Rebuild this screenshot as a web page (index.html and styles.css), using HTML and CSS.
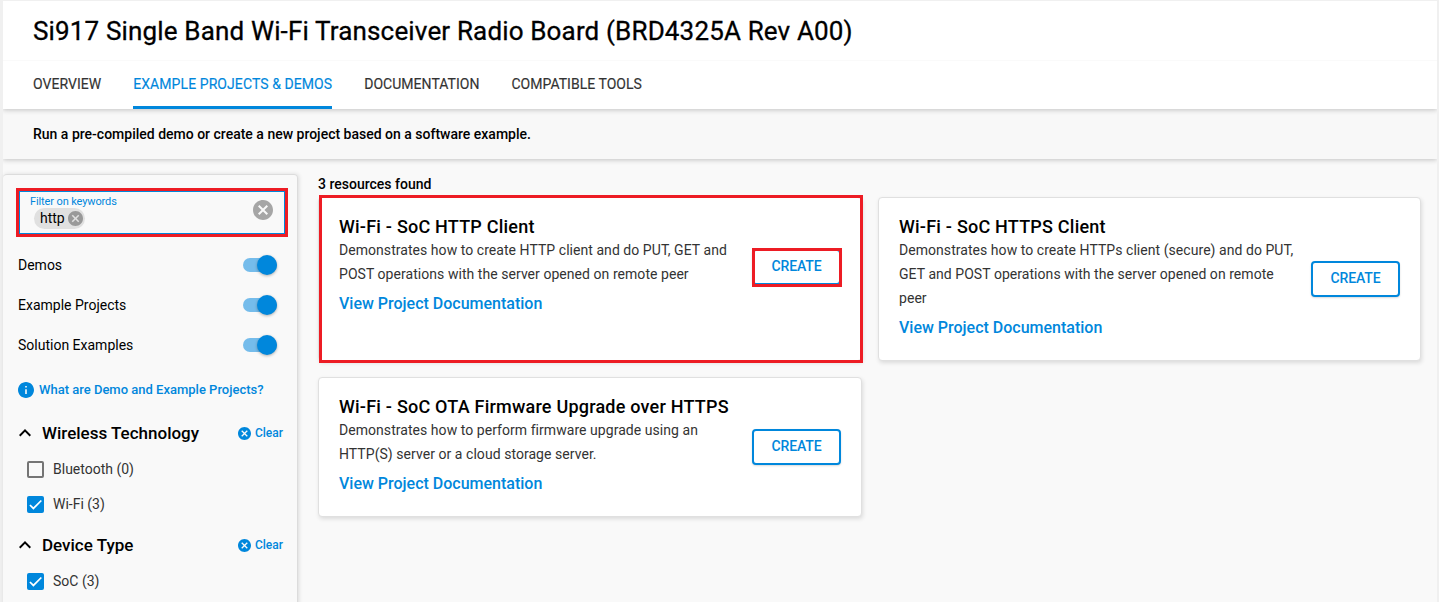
FILE: index.html
```html
<!DOCTYPE html>
<html lang="en">
<head>
<meta charset="utf-8">
<title>Si917 Radio Board</title>
<link rel="stylesheet" href="styles.css">
</head>
<body>
<svg width="0" height="0" class="defs">
  <symbol id="cancel" viewBox="2 2 20 20"><path d="M12 2C6.47 2 2 6.47 2 12s4.47 10 10 10 10-4.47 10-10S17.53 2 12 2zm5 13.59L15.59 17 12 13.41 8.41 17 7 15.59 10.59 12 7 8.41 8.41 7 12 10.59 15.59 7 17 8.41 13.41 12 17 15.59z"/></symbol>
  <symbol id="info" viewBox="2 2 20 20"><path d="M12 2C6.48 2 2 6.48 2 12s4.48 10 10 10 10-4.48 10-10S17.52 2 12 2zm1 15h-2v-6h2v6zm0-8h-2V7h2v2z"/></symbol>
  <symbol id="up" viewBox="6 8 12 8"><path d="M12 8l-6 6 1.41 1.41L12 10.83l4.59 4.58L18 14z"/></symbol>
  <symbol id="check" viewBox="0 0 24 24"><path d="M1.73 12.91L8.1 19.28 22.79 4.59" fill="none" stroke="#fff" stroke-width="3.12"/></symbol>
</svg>
<div class="page">
  <header class="header">
    <h1 class="title">Si917 Single Band Wi-Fi Transceiver Radio Board (BRD4325A Rev A00)</h1>
    <nav class="tabs">
      <a class="tab">OVERVIEW</a>
      <a class="tab active">EXAMPLE PROJECTS &amp; DEMOS</a>
      <a class="tab">DOCUMENTATION</a>
      <a class="tab">COMPATIBLE TOOLS</a>
    </nav>
  </header>
  <div class="intro">Run a pre-compiled demo or create a new project based on a software example.</div>
  <div class="content">
    <aside class="sidebar">
      <div class="filter marked">
        <div>
          <div class="filter-label">Filter on keywords</div>
          <div class="chip">http<svg class="chip-x"><use href="#cancel"/></svg></div>
        </div>
        <svg class="filter-x"><use href="#cancel"/></svg>
      </div>
      <div class="toggle-row">Demos<span class="toggle"><i class="knob"></i></span></div>
      <div class="toggle-row">Example Projects<span class="toggle"><i class="knob"></i></span></div>
      <div class="toggle-row">Solution Examples<span class="toggle"><i class="knob"></i></span></div>
      <a class="help"><svg class="help-icon"><use href="#info"/></svg>What are Demo and Example Projects?</a>
      <section class="group">
        <div class="group-head"><svg class="up"><use href="#up"/></svg><h2 class="group-title">Wireless Technology</h2><a class="clear"><svg class="clear-x"><use href="#cancel"/></svg>Clear</a></div>
        <label class="option"><span class="box"></span>Bluetooth (0)</label>
        <label class="option"><span class="box checked"><svg class="tick"><use href="#check"/></svg></span>Wi-Fi (3)</label>
      </section>
      <section class="group">
        <div class="group-head"><svg class="up"><use href="#up"/></svg><h2 class="group-title">Device Type</h2><a class="clear"><svg class="clear-x"><use href="#cancel"/></svg>Clear</a></div>
        <label class="option"><span class="box checked"><svg class="tick"><use href="#check"/></svg></span>SoC (3)</label>
      </section>
    </aside>
    <main class="main">
      <div class="count">3 resources found</div>
      <div class="cards">
        <article class="card card-marked">
          <div class="text">
            <h3 class="name">Wi-Fi - SoC HTTP Client</h3>
            <p class="desc">Demonstrates how to create HTTP client and do PUT, GET and<br>POST operations with the server opened on remote peer</p>
            <a class="link">View Project Documentation</a>
          </div>
          <button class="create create-marked">CREATE</button>
        </article>
        <article class="card">
          <div class="text">
            <h3 class="name">Wi-Fi - SoC HTTPS Client</h3>
            <p class="desc">Demonstrates how to create HTTPs client (secure) and do PUT,<br>GET and POST operations with the server opened on remote<br>peer</p>
            <a class="link">View Project Documentation</a>
          </div>
          <button class="create">CREATE</button>
        </article>
        <article class="card">
          <div class="text">
            <h3 class="name">Wi-Fi - SoC OTA Firmware Upgrade over HTTPS</h3>
            <p class="desc">Demonstrates how to perform firmware upgrade using an<br>HTTP(S) server or a cloud storage server.</p>
            <a class="link">View Project Documentation</a>
          </div>
          <button class="create">CREATE</button>
        </article>
      </div>
    </main>
  </div>
</div>
</body>
</html>
```
FILE: styles.css
```css
* { box-sizing: border-box; }
body {
  margin: 0;
  height: 602px;
  overflow: hidden;
  background: #f0f0f0;
  font-family: Roboto, "Liberation Sans", sans-serif;
  font-size: 14px;
  color: #000;
}
svg { display: block; flex: none; fill: currentColor; }
.defs { position: absolute; }
h1, h2, h3, p { margin: 0; }
.page { margin: 1px 2px 0 3px; height: 601px; background: #f9f9f9; }
.header {
  position: relative;
  z-index: 1;
  height: 108px;
  background: #fff;
  box-shadow: 0 1px 5px rgba(0, 0, 0, .22);
  clip-path: inset(0 0 -8px 0);
}
.title {
  height: 60px;
  padding-left: 30px;
  border-bottom: 1px solid #fafafa;
  font-size: 26px;
  line-height: 60px;
  font-weight: 400;
  letter-spacing: .155px;
  -webkit-text-stroke: .3px #000;
}
.tabs { display: flex; gap: 32px; padding-left: 30px; }
.tab {
  height: 48px;
  line-height: 47px;
  white-space: nowrap;
  letter-spacing: .03px;
  color: #333;
  -webkit-text-stroke: .15px;
}
.active { color: #0087dc; border-bottom: 3px solid #0087dc; letter-spacing: .08px; }
.intro {
  height: 50px;
  padding-left: 30px;
  line-height: 50px;
  font-weight: 500;
  background: #f8f8f8;
  box-shadow: 0 1px 5px rgba(0, 0, 0, .22);
  clip-path: inset(0 0 -8px 0);
}
.content { display: flex; padding-top: 15px; }
.sidebar {
  width: 295px;
  height: 440px;
  padding: 13px 9px 0 13px;
  border: 1px solid #dcdcdc;
  border-left: 0;
  border-radius: 4px 4px 0 0;
  box-shadow: 1px 0 4px rgba(0, 0, 0, .12);
}
.marked {
  width: 272px;
  height: 49px;
  border: 3px solid #ed1c24;
  box-shadow: inset 0 0 0 1px #0087dc;
}
.filter { display: flex; justify-content: space-between; padding: 4px 12px 0 11px; }
.filter-label { font-size: 11px; line-height: 13px; letter-spacing: -.12px; color: #0087dc; }
.chip {
  display: flex;
  align-items: center;
  gap: 3px;
  width: 51px;
  height: 21px;
  margin: 0 0 0 4px;
  padding: 0 0 1px 6px;
  border-radius: 11px;
  background: #e0e0e0;
  font-size: 14px;
}
.chip-x { width: 15px; height: 15px; color: #999; }
.filter-x { width: 20px; height: 20px; margin-top: 5px; color: #a6a6a6; }
.toggle-row {
  display: flex;
  align-items: center;
  justify-content: space-between;
  height: 40px;
  padding: 0 11px 0 2px;
}
.filter + .toggle-row { margin-top: 8px; }
.toggle {
  display: flex;
  justify-content: flex-end;
  align-items: center;
  width: 34px;
  height: 14px;
  border-radius: 7px;
  background: #75bceb;
}
.knob {
  width: 20px;
  height: 20px;
  border-radius: 50%;
  background: #0087dc;
  box-shadow: 0 1px 3px rgba(0, 0, 0, .3);
}
.help {
  display: flex;
  align-items: center;
  gap: 5px;
  height: 20px;
  margin: 14px 0 0 2px;
  font-size: 13px;
  font-weight: 500;
  color: #0087dc;
}
.help-icon { width: 16px; height: 16px; margin-top: 1px; }
.group-head { display: flex; align-items: center; height: 38px; padding: 0 5px 0 3px; }
.group { margin-top: 15px; }
.group + .group { margin-top: 4px; }
.up { width: 12px; height: 8px; }
.group-title { flex: 1; margin-left: 11px; font-size: 17px; font-weight: 500; }
.clear { display: flex; align-items: center; gap: 4px; font-size: 12px; font-weight: 500; color: #0087dc; }
.clear-x { width: 13px; height: 13px; margin-top: 1px; }
.option { display: flex; align-items: center; gap: 9px; height: 35px; padding: 0 0 1px 11px; color: #333; }
.box { width: 17px; height: 17px; margin-top: 1px; border: 2px solid #757575; border-radius: 2px; }
.checked { border: 0; background: #0087dc; }
.tick { width: 17px; height: 17px; padding: 2px; }
.main { margin-left: 20px; width: 1103px; }
.count { height: 23px; line-height: 20px; font-weight: 500; }
.cards { display: grid; grid-template-columns: 544px 543px; gap: 16px; }
.card {
  position: relative;
  display: flex;
  align-items: center;
  align-content: flex-start;
  flex-wrap: wrap;
  justify-content: space-between;
  padding: 16px 20px 20px;
  border: 1px solid #e0e0e0;
  border-radius: 4px;
  background: #fff;
  box-shadow: 1px 2px 4px rgba(0, 0, 0, .12);
}
.card-marked::after, .create-marked::after {
  content: "";
  position: absolute;
  border: 3px solid #ed1c24;
}
.card-marked::after { inset: -3px -2px -3px 0; }
.name { height: 24px; font-size: 18px; line-height: 26px; font-weight: 500; letter-spacing: .22px; white-space: nowrap; }
.desc { font-size: 14px; line-height: 24px; letter-spacing: .05px; color: #333; white-space: nowrap; }
.link { display: block; margin-top: 6px; font-size: 16px; line-height: 24px; font-weight: 500; color: #0087dc; }
.create {
  position: relative;
  width: 89px;
  height: 36px;
  margin-top: 4px;
  padding: 0 0 2px;
  border: 2px solid #0087dc;
  border-radius: 4px;
  background: #fff;
  font: 500 14px Roboto, sans-serif;
  letter-spacing: -.1px;
  color: #0087dc;
  box-shadow: 0 1px 2px rgba(0, 0, 0, .15);
}
.create-marked::after { inset: -3px -3px -4px -2px; }
```
